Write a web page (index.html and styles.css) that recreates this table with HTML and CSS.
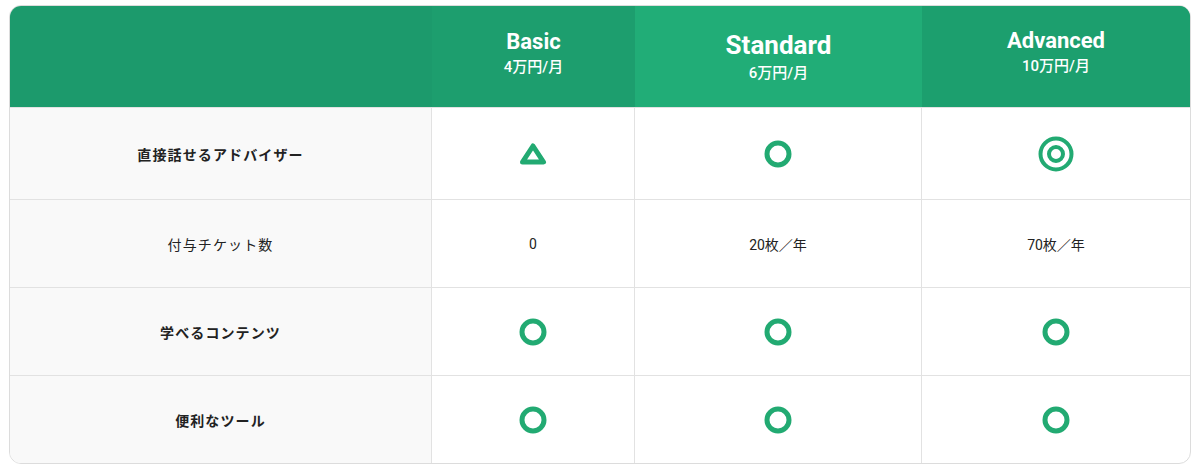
FILE: index.html
```html
<!DOCTYPE html>
<html lang="ja">
<head>
<meta charset="utf-8">
<link rel="stylesheet" href="styles.css">
</head>
<body>
<div class="table">
  <div class="row head">
    <div class="cell label-h"></div>
    <div class="cell plan basic"><div class="plan-name">Basic</div><div class="plan-price">4万円/月</div></div>
    <div class="cell plan standard"><div class="plan-name big">Standard</div><div class="plan-price">6万円/月</div></div>
    <div class="cell plan advanced"><div class="plan-name">Advanced</div><div class="plan-price">10万円/月</div></div>
  </div>
  <div class="row r1">
    <div class="cell label bold">直接話せるアドバイザー</div>
    <div class="cell"><svg class="ic tri" viewBox="0 0 28 24"><path d="M14 4 L24.5 20 H3.5 Z" fill="none" stroke="#22aa72" stroke-width="5" stroke-linejoin="round"/></svg></div>
    <div class="cell"><svg class="ic" viewBox="0 0 28 28"><circle cx="14" cy="14" r="11" fill="none" stroke="#22aa72" stroke-width="5"/></svg></div>
    <div class="cell"><svg class="ic dbl" viewBox="0 0 36 36"><circle cx="18" cy="18" r="15.5" fill="none" stroke="#22aa72" stroke-width="4"/><circle cx="18" cy="18" r="7" fill="none" stroke="#22aa72" stroke-width="4"/></svg></div>
  </div>
  <div class="row">
    <div class="cell label">付与チケット数</div>
    <div class="cell txt">0</div>
    <div class="cell txt">20枚／年</div>
    <div class="cell txt">70枚／年</div>
  </div>
  <div class="row">
    <div class="cell label bold">学べるコンテンツ</div>
    <div class="cell"><svg class="ic" viewBox="0 0 28 28"><circle cx="14" cy="14" r="11" fill="none" stroke="#22aa72" stroke-width="5"/></svg></div>
    <div class="cell"><svg class="ic" viewBox="0 0 28 28"><circle cx="14" cy="14" r="11" fill="none" stroke="#22aa72" stroke-width="5"/></svg></div>
    <div class="cell"><svg class="ic" viewBox="0 0 28 28"><circle cx="14" cy="14" r="11" fill="none" stroke="#22aa72" stroke-width="5"/></svg></div>
  </div>
  <div class="row">
    <div class="cell label bold">便利なツール</div>
    <div class="cell"><svg class="ic" viewBox="0 0 28 28"><circle cx="14" cy="14" r="11" fill="none" stroke="#22aa72" stroke-width="5"/></svg></div>
    <div class="cell"><svg class="ic" viewBox="0 0 28 28"><circle cx="14" cy="14" r="11" fill="none" stroke="#22aa72" stroke-width="5"/></svg></div>
    <div class="cell"><svg class="ic" viewBox="0 0 28 28"><circle cx="14" cy="14" r="11" fill="none" stroke="#22aa72" stroke-width="5"/></svg></div>
  </div>
</div>
</body>
</html>
```

FILE: styles.css
```css
*, *::before, *::after {
  box-sizing: border-box;
}
html, body {
  margin: 0;
  padding: 0;
  background: #ffffff;
}
body {
  padding: 5px 9px 0 9px;
  font-family: Roboto, "Noto Sans CJK JP", sans-serif;
  color: #222;
}
.table {
  width: 1182px;
  border: 1px solid #dcdcdc;
  border-radius: 12px;
  overflow: hidden;
}
.row {
  display: grid;
  grid-template-columns: 422px 203px 287px 1fr;
  height: 88px;
  border-top: 1px solid #e2e2e2;
}
.row.head {
  height: 101px;
  border-top: none;
  background: #1c9a6c;
}
.row.r1 {
  height: 92px;
}
.cell {
  display: flex;
  align-items: center;
  justify-content: center;
  border-right: 1px solid #e2e2e2;
  font-size: 14px;
}
.cell:last-child {
  border-right: none;
}
.head .cell {
  border-right: none;
  flex-direction: column;
  color: #fff;
}
.head .basic {
  background: #1d9e6e;
  padding-bottom: 7px;
}
.head .standard {
  background: #21ad77;
}
.head .advanced {
  background: #1c9f6e;
  padding-bottom: 9px;
}
.plan-name {
  font-size: 22px;
  font-weight: 700;
  line-height: 26px;
}
.plan-name.big {
  font-size: 26px;
  line-height: 30px;
}
.plan-price {
  font-size: 15px;
  font-weight: 500;
  line-height: 20px;
  margin-top: 2px;
}
.standard .plan-price {
  margin-top: 3px;
}
.label {
  background: #f9f9f9;
  letter-spacing: 0.08em;
}
.label.bold {
  font-weight: 700;
}
.txt {
  font-size: 14px;
}
.ic {
  width: 28px;
  height: 28px;
  display: block;
}
.ic.tri {
  height: 24px;
}
.ic.dbl {
  width: 36px;
  height: 36px;
}
```
